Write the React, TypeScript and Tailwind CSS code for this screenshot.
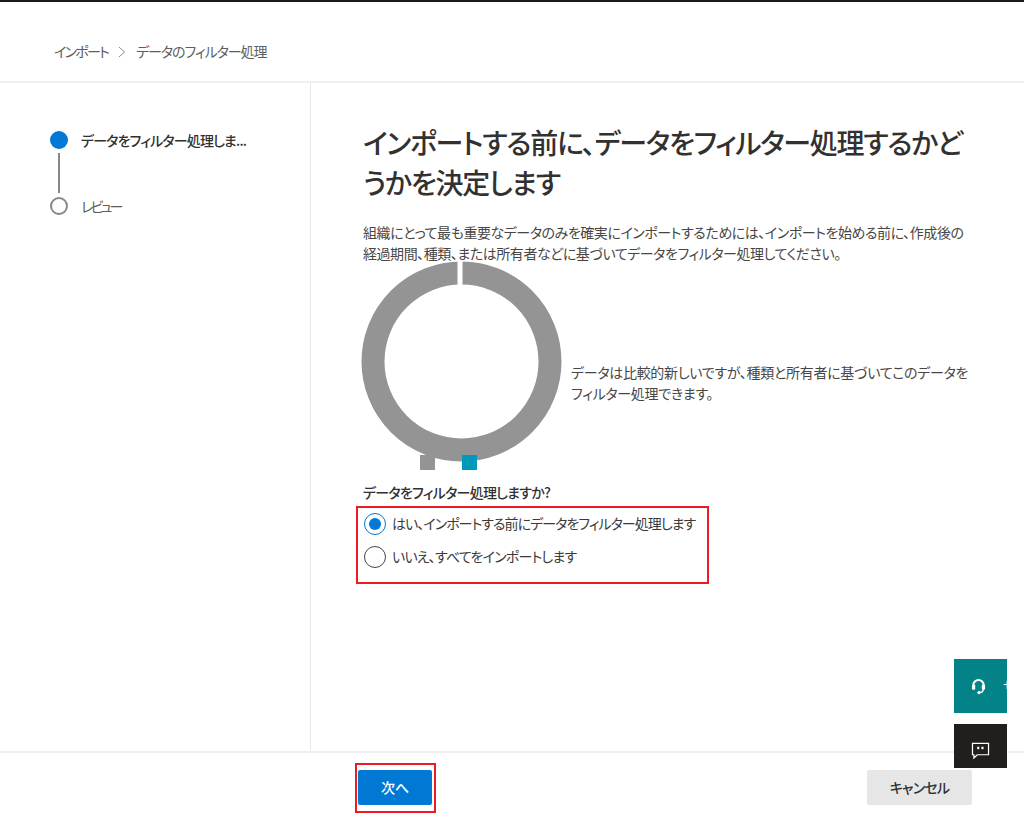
import React from "react";

function Donut() {
  const cx = 100.5, cy = 100.5;
  return (
    <svg width="202" height="212" viewBox="0 0 202 212" className="shrink-0 block">
      <circle cx={cx} cy={cy} r={88.5} fill="none" stroke="#949494" strokeWidth={23} />
      <rect x={96.5} y={0} width={5} height={25} fill="#ffffff" />
      <rect x={59} y={194} width={15} height={15} fill="#949494" />
      <rect x={101} y={194} width={15} height={15} fill="#0099bc" />
    </svg>
  );
}

function Radio({ checked, label, tight }: { checked?: boolean; label: string; tight?: boolean }) {
  return (
    <div className="flex items-center gap-[6px] h-[33px]">
      <span
        className={
          "w-[22px] h-[22px] rounded-full border-[1.5px] flex items-center justify-center shrink-0 " +
          (checked ? "border-[#0078d4]" : "border-[#484644]")
        }
      >
        {checked && <span className="w-[12px] h-[12px] rounded-full bg-[#0078d4]" />}
      </span>
      <span className={"text-[14px] text-[#3b3a39] whitespace-nowrap " + (tight ? "tracking-[-0.97px]" : "tracking-[-0.8px]")}>{label}</span>
    </div>
  );
}

export default function App() {
  return (
    <div className="w-[1024px] h-[820px] flex flex-col bg-white overflow-hidden relative font-['Noto_Sans_CJK_JP',sans-serif] [font-feature-settings:'palt'] border-t-2 border-[#1b1a19]">
      <header className="h-[81px] shrink-0 border-b-2 border-[#f0f0f0] flex items-center pl-[54px] pt-[20px] text-[14px] text-[#605e5c] tracking-[-1.05px]">
        <span className="tracking-[-1.75px]">インポート</span>
        <svg width="10" height="12" viewBox="0 0 10 12" className="ml-[9px] mr-[9px]">
          <path d="M2 1l5.5 5L2 11" fill="none" stroke="#8a8886" strokeWidth="1" />
        </svg>
        <span>データのフィルター処理</span>
      </header>

      <main className="flex-1 flex min-h-0">
        <aside className="w-[311px] shrink-0 border-r border-[#e8e8e8] pl-[50px] pt-[48px]">
          <div className="flex items-center gap-[13px] h-[18px]">
            <span className="w-[18px] h-[18px] rounded-full bg-[#0078d4] shrink-0" />
            <span className="text-[14px] font-medium text-[#323130] whitespace-nowrap tracking-[-0.85px]">データをフィルター処理しま...</span>
          </div>
          <div className="w-[2px] h-[40px] bg-[#8a8886] ml-[8px] mt-[4px] mb-[4px]" />
          <div className="flex items-center gap-[13px] h-[18px]">
            <span className="w-[18px] h-[18px] rounded-full border-[2.5px] border-[#8a8886] shrink-0" />
            <span className="text-[14px] text-[#605e5c] tracking-[-2.8px]">レビュー</span>
          </div>
        </aside>

        <section className="flex-1 pl-[52px] pt-[39px] min-w-0">
          <h1 className="w-[605px] text-[28px] leading-[40px] font-medium text-[#323130] tracking-[-1.27px]">
            インポートする前に、データをフィルター処理するかどうかを決定します
          </h1>
          <p className="mt-[20px] w-[605px] text-[14px] leading-[21px] text-[#484644] tracking-[-0.45px]">
            組織にとって最も重要なデータのみを確実にインポートするためには、インポートを始める前に、作成後の経過期間、種類、または所有者などに基づいてデータをフィルター処理してください。
          </p>
          <div className="flex items-center -ml-[2px] mt-[-3px]">
            <Donut />
            <p className="w-[405px] ml-[8px] mt-[32px] text-[14px] leading-[21px] text-[#484644] tracking-[-0.3px]">
              データは比較的新しいですが、種類と所有者に基づいてこのデータをフィルター処理できます。
            </p>
          </div>
          <div className="mt-[9px] text-[14px] font-medium text-[#323130] tracking-[-0.75px] leading-[20px]">
            データをフィルター処理しますか?
          </div>
          <div className="-ml-[7px] mt-[4px] w-[353px] h-[78px] border-2 border-[#ed1c24] pl-[6px]">
            <div className="-mt-[1px]">
              <Radio checked tight label="はい、インポートする前にデータをフィルター処理します" />
              <Radio label="いいえ、すべてをインポートします" />
            </div>
          </div>
        </section>
      </main>

      <footer className="h-[69px] shrink-0 border-t-2 border-[#f0f0f0] flex items-start pt-[10px] pl-[355px] pr-[52px] justify-between">
        <div className="w-[81px] h-[50px] border-2 border-[#ed1c24] pl-[1px] pt-[5px]">
          <button className="w-[74px] h-[35px] rounded-[2px] bg-[#0078d4] text-white text-[14px] font-medium">次へ</button>
        </div>
        <button className="mt-[7px] w-[105px] h-[35px] rounded-[2px] bg-[#e6e6e6] text-[#323130] text-[14px] font-medium tracking-[-0.8px]">キャンセル</button>
      </footer>

      <div className="absolute left-[954px] top-[657px] w-[53px] h-[54px] bg-[#038387] overflow-hidden flex items-center pl-[17px] gap-[17px] whitespace-nowrap">
        <svg width="15" height="17" viewBox="0 0 16 18" className="shrink-0">
          <path d="M2.5 10V7.5a5.5 5.5 0 0 1 11 0V10" fill="none" stroke="#fff" strokeWidth="2.2" />
          <rect x="1" y="7" width="3.5" height="5.5" rx="1.2" fill="#fff" />
          <rect x="11.5" y="7" width="3.5" height="5.5" rx="1.2" fill="#fff" />
          <path d="M13 12c0 2-1.5 3.5-4 3.5" fill="none" stroke="#fff" strokeWidth="1.6" />
          <circle cx="8.5" cy="15.5" r="1.7" fill="#fff" />
        </svg>
        <span className="text-white text-[14px]">サポート</span>
      </div>
      <div className="absolute left-[954px] top-[722px] w-[53px] h-[44px] bg-[#201f1e] flex items-center justify-center pt-[8px]">
        <svg width="19" height="17" viewBox="0 0 20 18">
          <path d="M1.5 1.5h17v12H6.5l-3.5 3.5v-3.5H1.5z" fill="none" stroke="#fff" strokeWidth="1.3" />
          <rect x="6.5" y="5" width="2.2" height="2.6" fill="#fff" />
          <rect x="11" y="5" width="2.2" height="2.6" fill="#fff" />
        </svg>
      </div>
    </div>
  );
}
